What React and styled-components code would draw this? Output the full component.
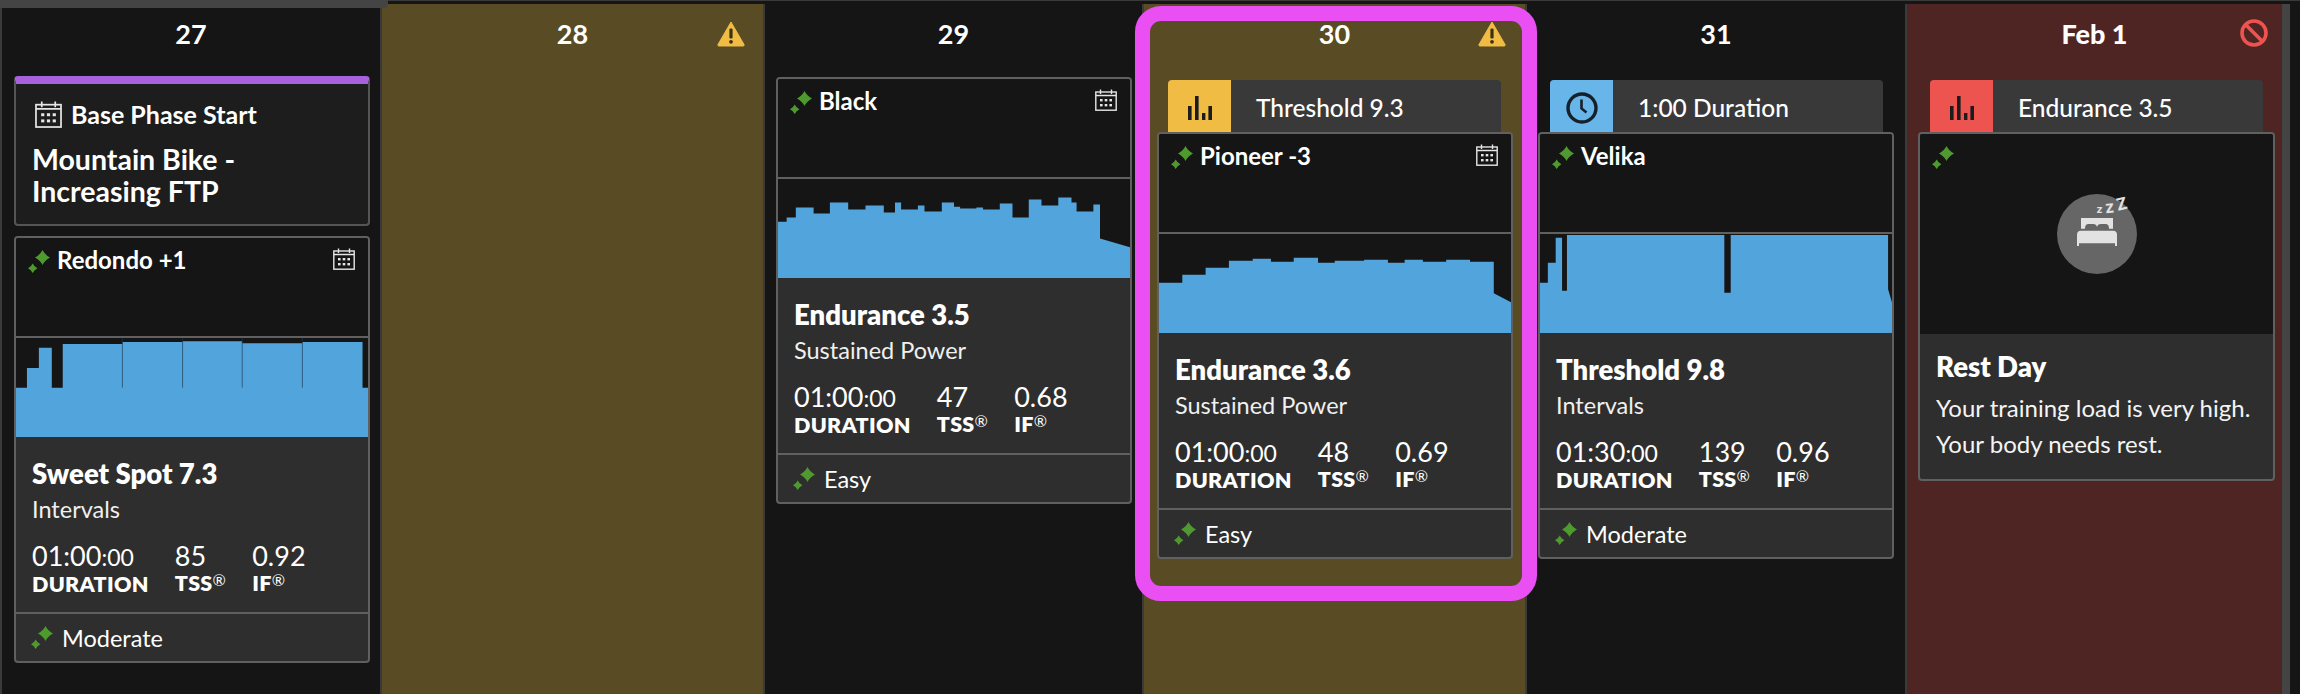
import React from "react";
import styled, { createGlobalStyle } from "styled-components";

const GlobalStyle = createGlobalStyle`
  html, body {
    margin: 0;
    background: #151515;
    height: 694px;
    overflow: hidden;
  }
  * {
    box-sizing: border-box;
  }
`;

const Page = styled.div`
  position: relative;
  display: flex;
  width: 2300px;
  height: 694px;
  padding: 3px 0 0 0;
  border-top: 1px solid #3a3a3a;
  background: #151515;
  color: #fff;
  font-family: Lato, "Open Sans", sans-serif;
`;

const TopTab = styled.div`
  position: absolute;
  top: -1px;
  left: 0;
  width: 388px;
  height: 8px;
  background: #444;
  border-radius: 0 0 4px 0;
  z-index: 2;
`;

const Column = styled.section`
  position: relative;
  flex: 0 0 ${({ $width }) => $width}px;
  padding-left: ${({ $pad }) => $pad}px;
  border-left: 2px solid #3a3a3a;
  background: ${({ $tone }) =>
    $tone === "warn" ? "#594c25" : $tone === "stop" ? "#4f2523" : "#151515"};
`;

const SideStrip = styled.div`
  flex: 0 0 8px;
  background: #444;
`;

const DayHead = styled.header`
  position: relative;
  height: 72px;
  margin-left: ${({ $pad }) => -$pad}px;
  padding-top: 14px;
  font-size: 27px;
  line-height: 32px;
  font-weight: ${({ $strong }) => ($strong ? 900 : 700)};
  text-align: center;
`;

const DayIcon = styled.svg`
  position: absolute;
  right: ${({ $right }) => $right}px;
  top: ${({ $top }) => $top}px;
`;

const Ring = styled.div`
  position: absolute;
  left: -9px;
  top: 2px;
  width: 402px;
  height: 595px;
  border: 15px solid #ea4ff4;
  border-radius: 26px;
  pointer-events: none;
  z-index: 3;
`;

const Badge = styled.div`
  display: flex;
  align-items: stretch;
  width: 333px;
  height: 52px;
  margin: 4px 0 0 ${({ $inset }) => $inset}px;
  border-radius: 4px 4px 0 0;
  background: #393939;
  font-size: 24.5px;
  font-weight: 500;
`;

const BadgeSwatch = styled.div`
  flex: 0 0 63px;
  display: flex;
  align-items: center;
  justify-content: center;
  padding-top: 4px;
  border-radius: 4px 0 0 0;
  background: ${({ $color }) => $color};
`;

const BadgeText = styled.div`
  display: flex;
  align-items: center;
  padding: 3px 0 0 25px;
`;

const PhaseCard = styled.div`
  width: 356px;
  height: 150px;
  margin-bottom: 10px;
  border: 2px solid #555;
  border-top: 8px solid #a861dc;
  border-radius: 4px;
  background: #1d1d1d;
  padding: 16px 0 0 16px;
`;

const PhaseHead = styled.div`
  display: flex;
  align-items: center;
  gap: 9px;
  margin-left: 3px;
  font-size: 25px;
  font-weight: 700;
  line-height: 28px;
`;

const PhaseTitle = styled.div`
  margin-top: 15px;
  font-size: 28.5px;
  font-weight: 700;
  line-height: 32px;
`;

const Card = styled.article`
  width: ${({ $wide }) => ($wide ? 357 : 356)}px;
  margin-top: ${({ $top }) => $top || 0}px;
  border: 2px solid #606060;
  border-radius: 4px;
  overflow: hidden;
  background: #2e2e2e;
`;

const CardHead = styled.div`
  display: flex;
  justify-content: space-between;
  height: 100px;
  padding: 10px 13px 0 12px;
  background: #151515;
  border-bottom: 2px solid #606060;
`;

const CardName = styled.div`
  display: flex;
  gap: 7px;
  font-size: 24px;
  line-height: 24px;
  font-weight: 700;
`;

const Sparkle = styled.svg`
  flex: none;
  margin-top: ${({ $drop }) => $drop || 0}px;
`;

const Chart = styled.svg`
  display: block;
  width: 100%;
  height: 99px;
  background: #151515;
`;

const Body = styled.div`
  padding: ${({ $top }) => $top}px 0 ${({ $bottom }) => $bottom}px 16px;
`;

const Title = styled.h3`
  margin: 0;
  font-size: 27.5px;
  line-height: 32px;
  font-weight: 800;
`;

const Subtitle = styled.div`
  margin-top: 4px;
  font-size: 23.5px;
  line-height: 30px;
  color: #f0f0f0;
`;

const Stats = styled.div`
  display: flex;
  gap: 26px;
  margin-top: 16px;
`;

const StatValue = styled.div`
  font-size: 27px;
  line-height: 32px;
  font-weight: 400;
`;

const Seconds = styled.span`
  font-size: 23px;
`;

const StatLabel = styled.div`
  font-size: 21.5px;
  line-height: 22px;
  font-weight: 800;
  letter-spacing: 0.3px;
`;

const Reg = styled.span`
  font-size: 16px;
  line-height: 0;
  font-weight: 400;
  vertical-align: 5px;
`;

const CardFoot = styled.div`
  display: flex;
  align-items: center;
  gap: 9px;
  height: 49px;
  padding-left: 15px;
  border-top: 2px solid #606060;
  font-size: 23.5px;
`;

const RestVisual = styled.div`
  position: relative;
  display: flex;
  align-items: center;
  justify-content: center;
  height: 200px;
  background: #151515;
`;

const RestSparkle = styled.div`
  position: absolute;
  left: 12px;
  top: 12px;
`;

const RestText = styled.p`
  margin: 7px 0 0;
  font-size: 24px;
  line-height: 36px;
  color: #f4f4f4;
`;

const SparkleIcon = ({ drop }) => (
  <Sparkle $drop={drop} width="22" height="23" viewBox="0 0 22 23">
    <path
      d="M14.5 0 Q17 5 22 7.5 Q17 10 14.5 15 Q12 10 7 7.5 Q12 5 14.5 0Z"
      fill="#4f9a2f"
    />
    <path
      d="M4.7 13.4 Q6.3 16.8 9.4 18.2 Q6.3 19.6 4.7 23 Q3.1 19.6 0 18.2 Q3.1 16.8 4.7 13.4Z"
      fill="#4f9a2f"
    />
  </Sparkle>
);

const CalendarIcon = ({ size = 22 }) => (
  <svg width={size} height={size} viewBox="0 0 22 22" style={{ flex: "none" }}>
    <g stroke="#e6e6e6" strokeWidth="1.4" fill="none">
      <rect x="0.8" y="3" width="20.4" height="18.2" />
      <path d="M5.5 0.5V5M16.5 0.5V5M0.8 6.5H21.2" />
    </g>
    <g fill="#e6e6e6">
      <rect x="5" y="10" width="2.6" height="2.4" />
      <rect x="9.7" y="10" width="2.6" height="2.4" />
      <rect x="14.4" y="10" width="2.6" height="2.4" />
      <rect x="5" y="15" width="2.6" height="2.4" />
      <rect x="9.7" y="15" width="2.6" height="2.4" />
      <rect x="14.4" y="15" width="2.6" height="2.4" />
    </g>
  </svg>
);

const WarnIcon = ({ right }) => (
  <DayIcon $right={right} $top={17} width="28" height="26" viewBox="0 0 28 26">
    <path
      d="M14 1 L27 23.5 Q27.6 25 26 25 H2 Q0.4 25 1 23.5Z"
      fill="#f0bc44"
      stroke="#f0bc44"
      strokeLinejoin="round"
    />
    <rect x="12.4" y="7.5" width="3.2" height="10" rx="1.2" fill="#3a3016" />
    <circle cx="14" cy="20.8" r="1.9" fill="#3a3016" />
  </DayIcon>
);

const BanIcon = ({ right }) => (
  <DayIcon $right={right} $top={15} width="28" height="28" viewBox="0 0 28 28">
    <circle cx="14" cy="14" r="12" fill="none" stroke="#ee544f" strokeWidth="3.6" />
    <path d="M5.5 5.5L22.5 22.5" stroke="#ee544f" strokeWidth="3.6" />
  </DayIcon>
);

const BarsIcon = () => (
  <svg width="24" height="24" viewBox="0 0 24 24" fill="#1c1c1c">
    <rect x="0" y="10" width="3.6" height="14" />
    <rect x="7" y="0" width="3.6" height="24" />
    <rect x="14" y="17" width="3.4" height="7" />
    <rect x="20.4" y="10" width="3.6" height="14" />
  </svg>
);

const ClockIcon = () => (
  <svg width="32" height="32" viewBox="0 0 32 32" fill="none" stroke="#15202a">
    <circle cx="16" cy="16" r="14" strokeWidth="3.4" />
    <path d="M15.5 7.5V16.5L20.5 20.5" strokeWidth="2.6" />
  </svg>
);

const BedIcon = () => (
  <svg width="80" height="80" viewBox="0 0 240 240">
    <circle cx="120" cy="120" r="120" fill="#666" />
    <g fill="#e2e2e2">
      <path d="M72 72H168V104H156Q156 90 146 90H130Q122 90 120 98Q118 90 110 90H94Q84 90 84 104H72Z" />
      <path d="M60 122Q60 110 72 110H168Q180 110 180 122V156H174V148H66V156H60Z" />
    </g>
    <g fill="#e2e2e2" fontFamily="Lato, sans-serif" fontWeight="900">
      <text x="119" y="58" fontSize="36">z</text>
      <text x="147" y="58" fontSize="54" transform="rotate(-6 147 58)">z</text>
      <text x="184" y="50" fontSize="50" transform="rotate(-14 184 50)">Z</text>
    </g>
  </svg>
);

// levels are [end x, top y] pairs in the chart's own viewBox
const levelsToPath = ({ box, levels, tail = [] }) => {
  const [x0, y0, w, h] = box;
  const bottom = y0 + h;
  let d = `M${x0} ${bottom}`;
  let prev = x0;
  levels.forEach(([end, y]) => {
    d += `L${prev} ${y}L${end} ${y}`;
    prev = end;
  });
  tail.forEach(([x, y]) => {
    d += `L${x} ${y}`;
  });
  return `${d}L${x0 + w} ${bottom}Z`;
};

const PowerChart = ({ data }) => (
  <Chart viewBox={data.box.join(" ")} preserveAspectRatio="none">
    <path d={levelsToPath(data)} fill="#52a5dc" />
    {(data.ticks || []).map((x) => (
      <line key={x} x1={x} x2={x} y1={data.box[1]} y2={data.tickEnd} stroke="#1d3a4e" strokeWidth="1.6" />
    ))}
  </Chart>
);

const redondo = {
  box: [32, -8, 708, 301],
  levels: [
    [54, 143], [78, 83], [104, 22], [126, 143], [246, 10], [367, 4],
    [487, 2], [608, 8], [729, 4], [740, 143],
  ],
  ticks: [246, 367, 487, 608],
  tickEnd: 143,
};

const black = {
  box: [35, 537, 692, 296],
  levels: [
    [52, 665], [70, 652], [105, 622], [137, 640], [173, 607], [207, 628],
    [243, 616], [265, 637], [277, 607], [310, 628], [323, 616], [357, 634],
    [381, 607], [393, 620], [425, 625], [438, 622], [471, 628], [496, 610],
    [528, 652], [553, 598], [586, 616], [612, 592], [622, 607], [655, 634],
    [668, 613],
  ],
  tail: [[668, 715], [727, 741]],
};

const pioneer = {
  box: [780, 705, 695, 296],
  levels: [
    [826, 851], [872, 827], [918, 806], [965, 785], [1001, 779], [1046, 788],
    [1094, 776], [1127, 791], [1185, 785], [1232, 782], [1265, 791],
    [1301, 782], [1347, 788], [1394, 782], [1441, 788],
  ],
  tail: [[1441, 882], [1475, 909]],
};

const velika = {
  box: [20, 705, 718, 296],
  levels: [
    [36, 851], [52, 791], [65, 716], [75, 875], [396, 708], [409, 881],
    [730, 708],
  ],
  tail: [[730, 870], [738, 910]],
};

const Workout = ({ name, chart, title, kind, time, seconds, tss, factor, effort, top }) => (
  <Card $top={top}>
    <CardHead>
      <CardName>
        <SparkleIcon drop={2} />
        {name}
      </CardName>
      {name !== "Velika" && <CalendarIcon />}
    </CardHead>
    <PowerChart data={chart} />
    <Body $top={21} $bottom={17}>
      <Title>{title}</Title>
      <Subtitle>{kind}</Subtitle>
      <Stats>
        <div>
          <StatValue>
            {time}
            <Seconds>{seconds}</Seconds>
          </StatValue>
          <StatLabel>DURATION</StatLabel>
        </div>
        <div>
          <StatValue>{tss}</StatValue>
          <StatLabel>
            TSS<Reg>®</Reg>
          </StatLabel>
        </div>
        <div>
          <StatValue>{factor}</StatValue>
          <StatLabel>
            IF<Reg>®</Reg>
          </StatLabel>
        </div>
      </Stats>
    </Body>
    <CardFoot>
      <SparkleIcon />
      {effort}
    </CardFoot>
  </Card>
);

export default function App() {
  return (
    <Page>
      <GlobalStyle />
      <TopTab />

      <Column $width={380} $pad={12}>
        <DayHead $pad={12}>27</DayHead>
        <PhaseCard>
          <PhaseHead>
            <CalendarIcon size={27} />
            Base Phase Start
          </PhaseHead>
          <PhaseTitle>
            Mountain Bike -
            <br />
            Increasing FTP
          </PhaseTitle>
        </PhaseCard>
        <Workout
          name="Redondo +1"
          chart={redondo}
          title="Sweet Spot 7.3"
          kind="Intervals"
          time="01:00"
          seconds=":00"
          tss="85"
          factor="0.92"
          effort="Moderate"
        />
      </Column>

      <Column $width={383} $pad={12} $tone="warn">
        <DayHead $pad={12}>
          28
          <WarnIcon right={18} />
        </DayHead>
      </Column>

      <Column $width={379} $pad={11}>
        <DayHead $pad={11}>29</DayHead>
        <Workout
          top={1}
          name="Black"
          chart={black}
          title="Endurance 3.5"
          kind="Sustained Power"
          time="01:00"
          seconds=":00"
          tss="47"
          factor="0.68"
          effort="Easy"
        />
      </Column>

      <Column $width={383} $pad={13} $tone="warn">
        <Ring />
        <DayHead $pad={13}>
          30
          <WarnIcon right={19} />
        </DayHead>
        <Badge $inset={11}>
          <BadgeSwatch $color="#f0bc44">
            <BarsIcon />
          </BadgeSwatch>
          <BadgeText>Threshold 9.3</BadgeText>
        </Badge>
        <Workout
          name="Pioneer -3"
          chart={pioneer}
          title="Endurance 3.6"
          kind="Sustained Power"
          time="01:00"
          seconds=":00"
          tss="48"
          factor="0.69"
          effort="Easy"
        />
      </Column>

      <Column $width={380} $pad={11}>
        <DayHead $pad={11}>31</DayHead>
        <Badge $inset={12}>
          <BadgeSwatch $color="#68b5ea">
            <ClockIcon />
          </BadgeSwatch>
          <BadgeText>1:00 Duration</BadgeText>
        </Badge>
        <Workout
          name="Velika"
          chart={velika}
          title="Threshold 9.8"
          kind="Intervals"
          time="01:30"
          seconds=":00"
          tss="139"
          factor="0.96"
          effort="Moderate"
        />
      </Column>

      <Column $width={377} $pad={11} $tone="stop">
        <DayHead $pad={11} $strong>
          Feb 1
          <BanIcon right={14} />
        </DayHead>
        <Badge $inset={12}>
          <BadgeSwatch $color="#ee544f">
            <BarsIcon />
          </BadgeSwatch>
          <BadgeText>Endurance 3.5</BadgeText>
        </Badge>
        <Card $wide>
          <RestVisual>
            <RestSparkle>
              <SparkleIcon />
            </RestSparkle>
            <BedIcon />
          </RestVisual>
          <Body $top={17} $bottom={17}>
            <Title>Rest Day</Title>
            <RestText>
              Your training load is very high.
              <br />
              Your body needs rest.
            </RestText>
          </Body>
        </Card>
      </Column>

      <SideStrip />
    </Page>
  );
}
